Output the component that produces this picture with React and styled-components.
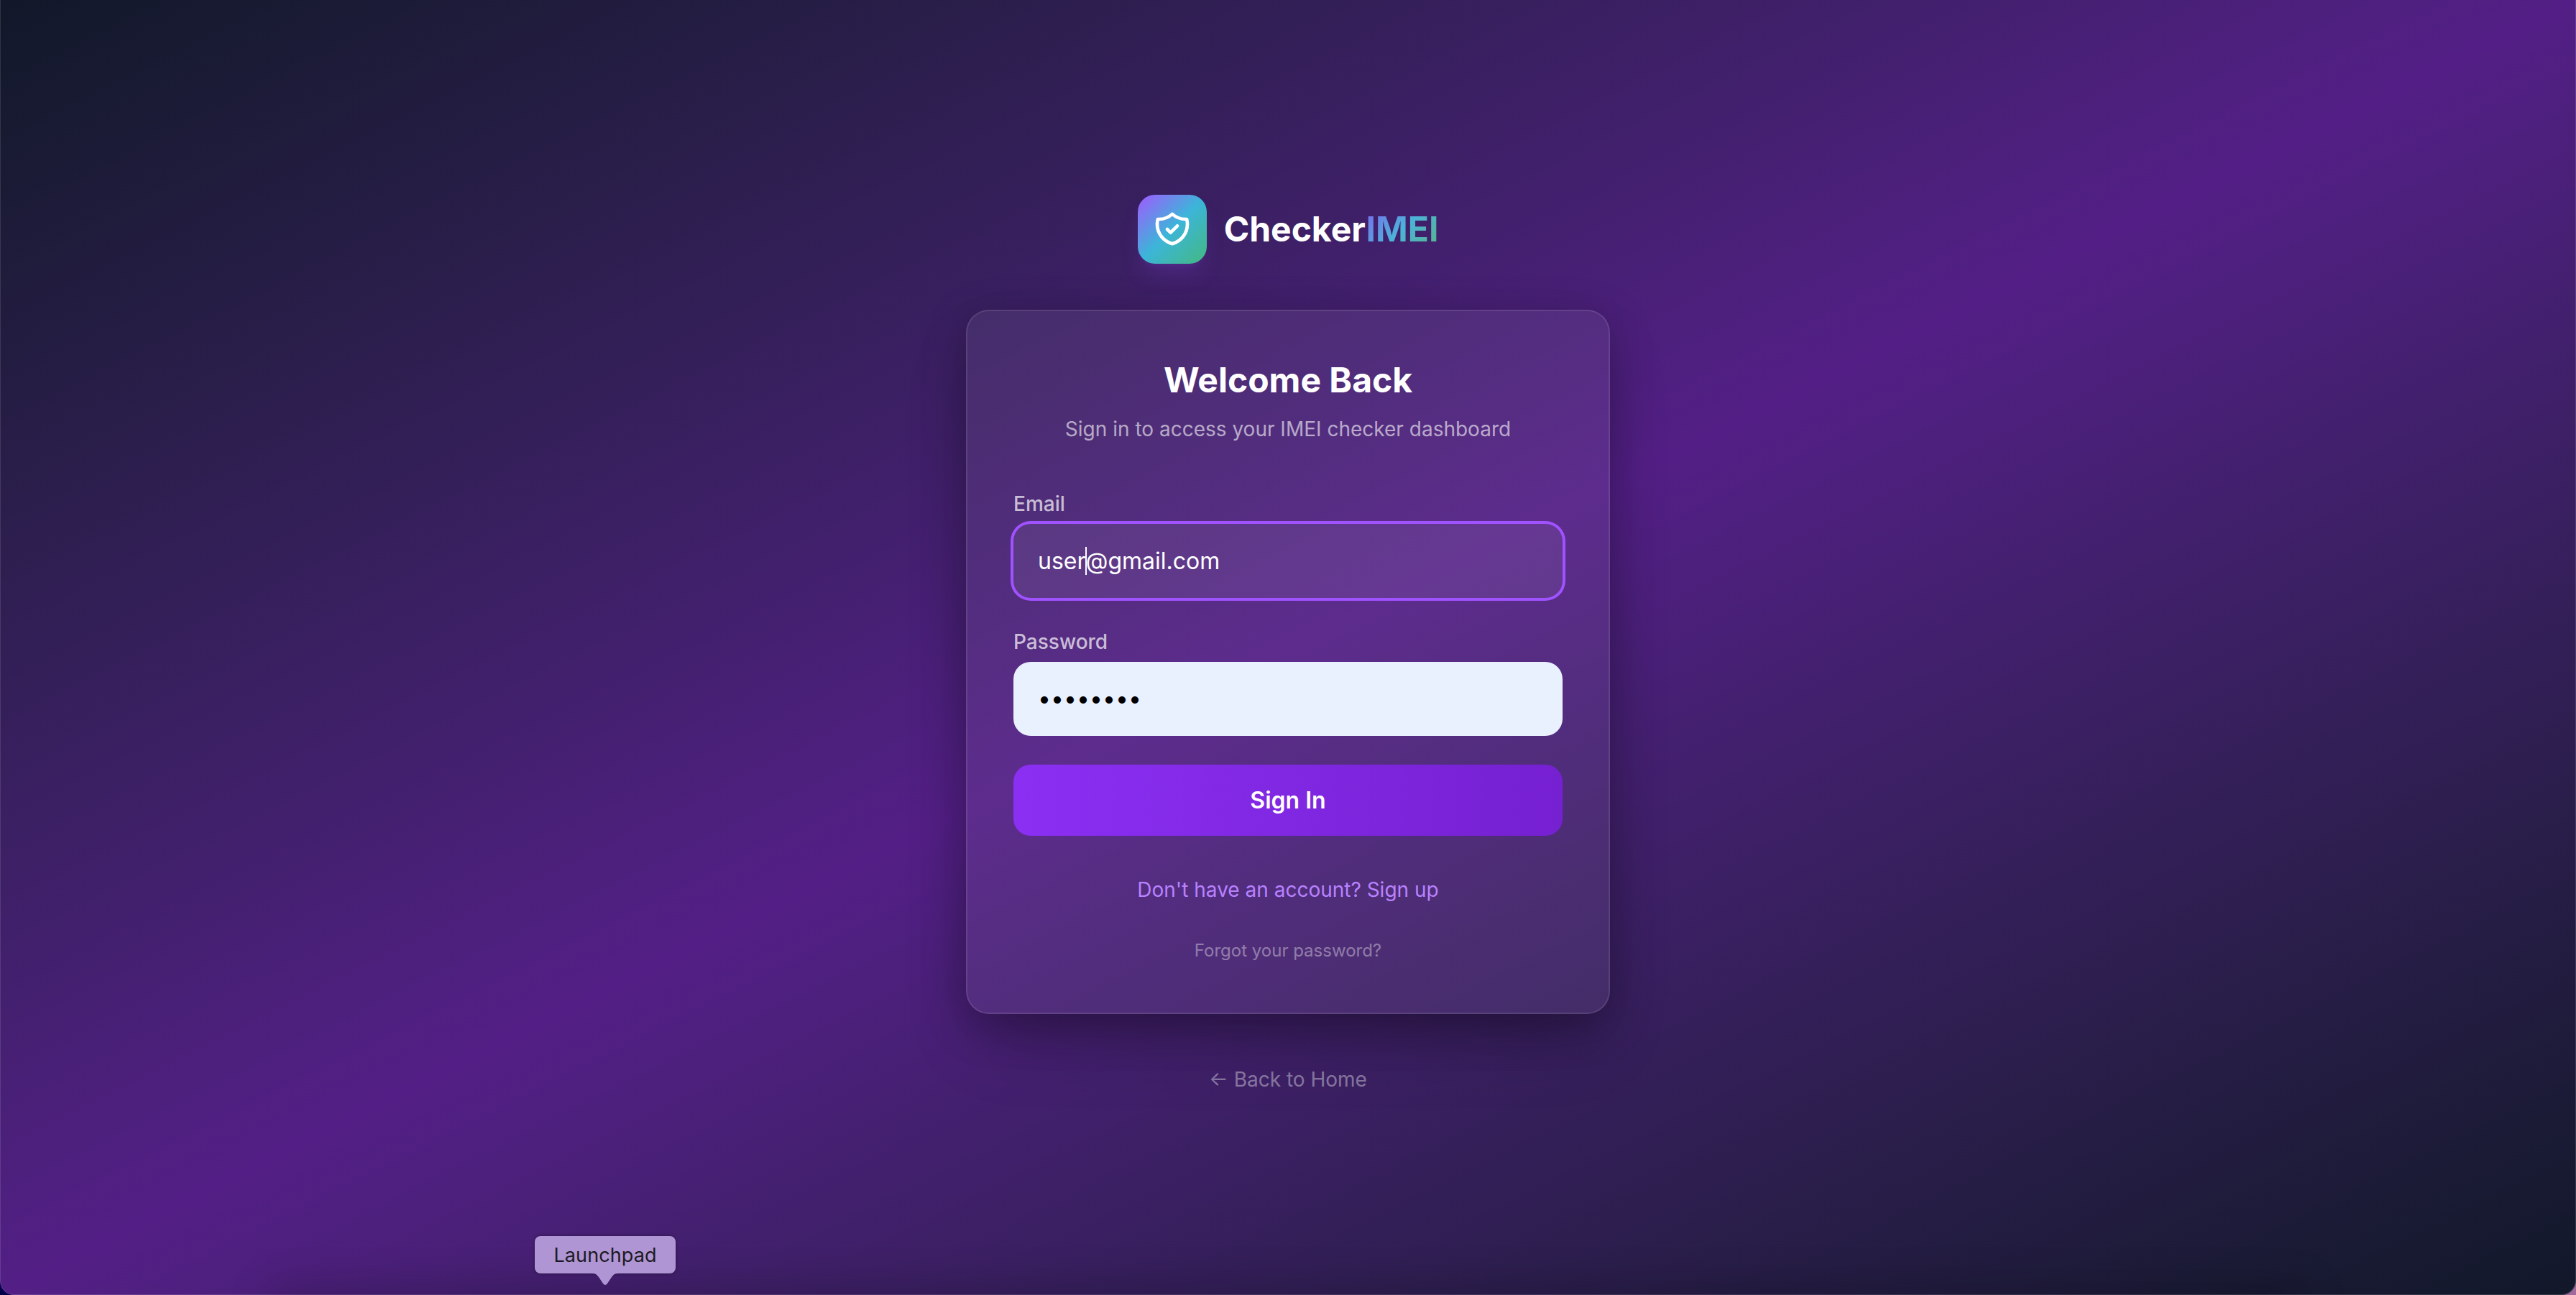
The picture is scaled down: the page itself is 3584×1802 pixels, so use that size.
import styled, { createGlobalStyle } from "styled-components";

export default function LoginPage() {
    return (
        <>
            <GlobalStyle />
            <Desktop>
                <Screen>
                    <Brand>
                        <LogoTile>
                            <ShieldIcon />
                        </LogoTile>
                        <BrandName>Checker<span>IMEI</span></BrandName>
                    </Brand>

                    <Card>
                        <Title>Welcome Back</Title>
                        <Subtitle>Sign in to access your IMEI checker dashboard</Subtitle>

                        <Label>Email</Label>
                        <Field $focused>
                            user<Caret />@gmail.com
                        </Field>

                        <Label $spaced>Password</Label>
                        <Field $filled>
                            <Dots>••••••••</Dots>
                        </Field>

                        <SignIn>Sign In</SignIn>
                        <SignUp href="#">Don't have an account? Sign up</SignUp>
                        <Forgot href="#">Forgot your password?</Forgot>
                    </Card>

                    <Back href="#">← Back to Home</Back>
                </Screen>
                <DockShadow />
                <DockLabel>
                    Launchpad
                    <DockArrow viewBox="0 0 36 17">
                        <path d="M0 0 C6 0 7 3 9 5 L15 14 Q18 18 21 14 L27 5 C29 3 30 0 36 0 Z" fill="#af95d3" />
                    </DockArrow>
                </DockLabel>
            </Desktop>
        </>
    )
}

function ShieldIcon() {
    return (
        <svg width="56" height="56" viewBox="0 0 24 24" fill="none" stroke="#fff" strokeWidth="2" strokeLinecap="round" strokeLinejoin="round">
            <path d="M9 12l2 2 4-4m5.618-4.016A11.955 11.955 0 0112 2.944a11.955 11.955 0 01-8.618 3.04A12.02 12.02 0 003 9c0 5.591 3.824 10.29 9 11.622 5.176-1.332 9-6.03 9-11.622 0-1.042-.133-2.052-.382-3.016z" />
        </svg>
    )
}

const GlobalStyle = createGlobalStyle`
    * {
        box-sizing: border-box;
        margin: 0;
    }
    body {
        font-family: Inter, "Liberation Sans", sans-serif;
        overflow: hidden;
    }
`

const Desktop = styled.div`
    position: relative;
    height: 1802px;
    overflow: hidden;
    background: linear-gradient(90deg, #04004a 50%, #a26a9c 50%);
`

const Screen = styled.main`
    height: 1802px;
    padding-top: 271px;
    display: flex;
    flex-direction: column;
    align-items: center;
    border-radius: 0 0 20px 20px;
    background: linear-gradient(to bottom right in oklab, #111829, #531f86, #111829);
    box-shadow: inset 1px 0 rgba(255, 255, 255, 0.12), inset -1px -1px rgba(255, 255, 255, 0.15);
`

const Brand = styled.header`
    display: flex;
    align-items: center;
    gap: 24px;
    margin-bottom: 64px;
`

const LogoTile = styled.div`
    width: 96px;
    height: 96px;
    display: flex;
    align-items: center;
    justify-content: center;
    border-radius: 24px;
    background: linear-gradient(to bottom right, #a259ff, #3cb5d9, #43b97f);
    box-shadow: 0 20px 30px -6px rgba(152, 80, 255, 0.17), 0 8px 12px -8px rgba(152, 80, 255, 0.2);
`

const BrandName = styled.h1`
    font-size: 48px;
    line-height: 64px;
    font-weight: 700;
    color: #fff;
    span {
        color: transparent;
        background: linear-gradient(135deg, #7c68f0, #4cb3d8 50%, #57b487);
        background-clip: text;
    }
`

const Card = styled.section`
    width: 896px;
    height: 980px;
    padding: 64px;
    display: flex;
    flex-direction: column;
    align-items: center;
    border: 2px solid rgba(255, 255, 255, 0.1);
    border-radius: 32px;
    background: rgba(255, 255, 255, 0.06);
    box-shadow: 0 50px 100px -24px rgba(0, 0, 0, 0.25), 0 16px 60px rgba(0, 0, 0, 0.25);
`

const Title = styled.h2`
    font-size: 48px;
    line-height: 64px;
    font-weight: 700;
    color: #fff;
`

const Subtitle = styled.p`
    margin: 16px 0 64px;
    font-size: 28px;
    line-height: 40px;
    color: rgba(255, 255, 255, 0.6);
`

const Label = styled.label`
    align-self: flex-start;
    margin: ${props => props.$spaced ? "41px" : "0"} 0 8px;
    font-size: 28px;
    line-height: 40px;
    font-weight: 500;
    color: rgba(255, 255, 255, 0.7);
`

const Field = styled.div`
    width: 100%;
    height: 103px;
    padding: 0 34px 1px;
    display: flex;
    align-items: center;
    border-radius: 24px;
    font-size: 32px;
    color: ${props => props.$filled ? "#000" : "#fff"};
    background: ${props => props.$filled ? "#e9f0fe" : "rgba(255, 255, 255, 0.06)"};
    box-shadow: ${props => props.$focused ? "0 0 0 4px #a052ff" : "none"};
`

const Caret = styled.i`
    width: 2px;
    height: 39px;
    margin: 0 -1px;
    background: #fff;
`

const Dots = styled.span`
    padding-bottom: 1px;
`

const SignIn = styled.button`
    width: 100%;
    height: 99px;
    margin-top: 40px;
    border: none;
    border-radius: 24px;
    background: linear-gradient(to right, #8b2ff3, #7520d1);
    font-family: inherit;
    font-size: 32px;
    font-weight: 600;
    color: #fff;
`

const SignUp = styled.a`
    margin-top: 55px;
    font-size: 28px;
    line-height: 40px;
    text-decoration: none;
    color: #b882ff;
`

const Forgot = styled.a`
    margin-top: 49px;
    font-size: 24px;
    line-height: 32px;
    text-decoration: none;
    color: rgba(255, 255, 255, 0.4);
`

const Back = styled.a`
    margin-top: 71px;
    font-size: 28px;
    line-height: 40px;
    text-decoration: none;
    color: rgba(255, 255, 255, 0.4);
`

/* shade thrown upwards by the dock below the window */
const DockShadow = styled.div`
    position: absolute;
    left: 380px;
    right: 380px;
    bottom: -20px;
    height: 20px;
    box-shadow: 0 0 60px 4px rgba(0, 0, 0, 0.3);
`

/* dock tooltip floating over the window */
const DockLabel = styled.div`
    position: absolute;
    left: 744px;
    top: 1720px;
    width: 196px;
    height: 52px;
    display: flex;
    align-items: center;
    justify-content: center;
    border-radius: 8px;
    background: #af95d3;
    box-shadow: 0 0 4px rgba(0, 0, 0, 0.4);
    font-size: 27px;
    letter-spacing: 0.1px;
    color: #1c1a24;
`

const DockArrow = styled.svg`
    position: absolute;
    left: 80px;
    top: 52px;
    width: 36px;
    height: 17px;
`
